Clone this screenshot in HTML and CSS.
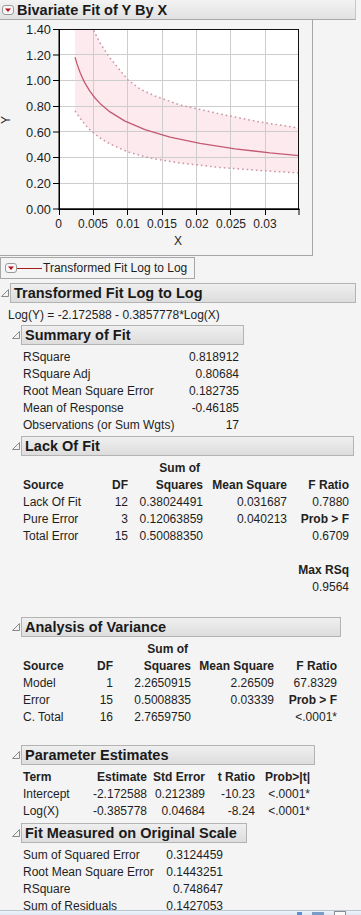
FILE: index.html
```html
<!DOCTYPE html>
<html lang="en">
<head>
<meta charset="UTF-8">
<meta name="viewport" content="width=device-width, initial-scale=1.0">
<title>Bivariate Fit of Y By X</title>
<link rel="stylesheet" href="styles.css">
</head>
<body>
<div class="report-head">
    <svg class="menu-btn" width="12" height="10" viewBox="0 0 12 10">
        <rect x="0.5" y="0.5" width="11" height="9" rx="2.5" fill="#f7f7f7" stroke="#9a9a9a"/>
        <polygon points="3,3.5 9,3.5 6,7" fill="#c0101a"/>
    </svg>
    <span class="report-title">Bivariate Fit of Y By X</span>
</div>

<div class="plot-frame">
    <svg class="plot" width="312" height="235" viewBox="0 20 312 235">
        <defs>
            <clipPath id="area"><rect x="59" y="29" width="240" height="180"/></clipPath>
        </defs>
        <rect x="59" y="29" width="240" height="180" fill="#fff"/>
        <g clip-path="url(#area)">
            <polygon class="band" points="75,29 93,29 100,43 110,58 128,80 140,89 155,96 180,105 220,114 260,122 299,128 299,173 260,170.5 220,167.5 180,163 150,158 128,152 110,144 100,138 90,130 85,124.5 80,118 75,111"/>
            <g class="grid">
                <line x1="93.5" y1="29" x2="93.5" y2="209"/>
                <line x1="127.5" y1="29" x2="127.5" y2="209"/>
                <line x1="162.5" y1="29" x2="162.5" y2="209"/>
                <line x1="196.5" y1="29" x2="196.5" y2="209"/>
                <line x1="230.5" y1="29" x2="230.5" y2="209"/>
                <line x1="265.5" y1="29" x2="265.5" y2="209"/>
                <line x1="59" y1="54.5" x2="299" y2="54.5"/>
                <line x1="59" y1="80.5" x2="299" y2="80.5"/>
                <line x1="59" y1="106.5" x2="299" y2="106.5"/>
                <line x1="59" y1="131.5" x2="299" y2="131.5"/>
                <line x1="59" y1="157.5" x2="299" y2="157.5"/>
                <line x1="59" y1="183.5" x2="299" y2="183.5"/>
            </g>
            <polyline class="ci" points="85,9 93,29 100,43 110,58 128,80 140,89 155,96 180,105 220,114 260,122 299,128"/>
            <polyline class="ci" points="75,111 80,118 85,124.5 90,130 100,138 110,144 128,152 150,158 180,163 220,167.5 260,170.5 299,173"/>
            <polyline class="fit" points="75,57.2 77,63.9 80,72.3 82.5,78.1 85,83.1 90,91.4 95,98 100,103.4 110,111.9 125,121.1 145,129.7 170,137.1 200,143.4 235,148.8 270,152.9 299,155.6"/>
        </g>
        <rect class="border" x="59.5" y="29.5" width="239" height="179.5"/>
        <line class="axis" x1="59.25" y1="29" x2="59.25" y2="210"/>
        <line class="axis" x1="58.5" y1="209.25" x2="299.5" y2="209.25"/>
        <g class="ticks">
            <line x1="53" y1="29.5" x2="59" y2="29.5"/>
            <line x1="53" y1="55" x2="59" y2="55"/>
            <line x1="53" y1="80.5" x2="59" y2="80.5"/>
            <line x1="53" y1="106.5" x2="59" y2="106.5"/>
            <line x1="53" y1="132" x2="59" y2="132"/>
            <line x1="53" y1="157.5" x2="59" y2="157.5"/>
            <line x1="53" y1="183.5" x2="59" y2="183.5"/>
            <line x1="53" y1="209" x2="59" y2="209"/>
            <line x1="59.5" y1="209" x2="59.5" y2="215"/>
            <line x1="93.5" y1="209" x2="93.5" y2="215"/>
            <line x1="127.5" y1="209" x2="127.5" y2="215"/>
            <line x1="162.5" y1="209" x2="162.5" y2="215"/>
            <line x1="196.5" y1="209" x2="196.5" y2="215"/>
            <line x1="230.5" y1="209" x2="230.5" y2="215"/>
            <line x1="265.5" y1="209" x2="265.5" y2="215"/>
            <line x1="299" y1="209" x2="299" y2="215"/>
        </g>
        <g class="ylabels">
            <text x="51" y="34">1.40</text>
            <text x="51" y="59.5">1.20</text>
            <text x="51" y="85">1.00</text>
            <text x="51" y="111">0.80</text>
            <text x="51" y="136.5">0.60</text>
            <text x="51" y="162">0.40</text>
            <text x="51" y="188">0.20</text>
            <text x="51" y="213.5">0.00</text>
        </g>
        <g class="xlabels">
            <text x="58.5" y="227.5">0</text>
            <text x="93" y="227.5">0.005</text>
            <text x="128" y="227.5">0.01</text>
            <text x="162" y="227.5">0.015</text>
            <text x="197" y="227.5">0.02</text>
            <text x="231" y="227.5">0.025</text>
            <text x="265" y="227.5">0.03</text>
        </g>
        <text class="axis-title" x="178" y="245">X</text>
        <text class="axis-title" transform="translate(10 120) rotate(-90)">Y</text>
    </svg>
</div>

<div class="legend">
    <svg class="menu-btn" width="12" height="10" viewBox="0 0 12 10">
        <rect x="0.5" y="0.5" width="11" height="9" rx="2.5" fill="#f7f7f7" stroke="#9a9a9a"/>
        <polygon points="3,3.5 9,3.5 6,7" fill="#c0101a"/>
    </svg>
    <span class="legend-line"></span>
    <span>Transformed Fit Log to Log</span>
</div>

<div class="outline top">
    <div class="outline-row">
        <svg class="toggle" width="10" height="10" viewBox="0 0 10 10"><polygon points="8.5,1.5 8.5,8.5 1.5,8.5"/></svg>
        <div class="outline-box box-fit">Transformed Fit Log to Log</div>
    </div>
    <div class="equation">Log(Y) = -2.172588 - 0.3857778*Log(X)</div>

    <div class="outline sub sub-summary">
        <div class="outline-row">
            <svg class="toggle" width="10" height="10" viewBox="0 0 10 10"><polygon points="8.5,1.5 8.5,8.5 1.5,8.5"/></svg>
            <div class="outline-box box-summary">Summary of Fit</div>
        </div>
        <table class="data t-summary">
            <tr><td>RSquare</td><td class="num">0.818912</td></tr>
            <tr><td>RSquare Adj</td><td class="num">0.80684</td></tr>
            <tr><td>Root Mean Square Error</td><td class="num">0.182735</td></tr>
            <tr><td>Mean of Response</td><td class="num">-0.46185</td></tr>
            <tr><td>Observations (or Sum Wgts)</td><td class="num">17</td></tr>
        </table>
    </div>

    <div class="outline sub sub-lof">
        <div class="outline-row">
            <svg class="toggle" width="10" height="10" viewBox="0 0 10 10"><polygon points="8.5,1.5 8.5,8.5 1.5,8.5"/></svg>
            <div class="outline-box box-lof">Lack Of Fit</div>
        </div>
        <table class="data t-lof">
            <colgroup><col class="lof-1"><col class="lof-2"><col class="lof-3"><col class="lof-4"><col class="lof-5"></colgroup>
            <tr class="hd"><td></td><td></td><td class="num sum-of">Sum of</td><td></td><td></td></tr>
            <tr class="hd"><td>Source</td><td class="num">DF</td><td class="num">Squares</td><td class="num">Mean Square</td><td class="num">F Ratio</td></tr>
            <tr><td>Lack Of Fit</td><td class="num">12</td><td class="num">0.38024491</td><td class="num">0.031687</td><td class="num">0.7880</td></tr>
            <tr><td>Pure Error</td><td class="num">3</td><td class="num">0.12063859</td><td class="num">0.040213</td><td class="num b">Prob &gt; F</td></tr>
            <tr><td>Total Error</td><td class="num">15</td><td class="num">0.50088350</td><td></td><td class="num">0.6709</td></tr>
            <tr><td colspan="5">&nbsp;</td></tr>
            <tr><td colspan="4"></td><td class="num b">Max RSq</td></tr>
            <tr><td colspan="4"></td><td class="num">0.9564</td></tr>
        </table>
    </div>

    <div class="outline sub sub-anova">
        <div class="outline-row">
            <svg class="toggle" width="10" height="10" viewBox="0 0 10 10"><polygon points="8.5,1.5 8.5,8.5 1.5,8.5"/></svg>
            <div class="outline-box box-anova">Analysis of Variance</div>
        </div>
        <table class="data t-anova">
            <colgroup><col class="av-1"><col class="av-2"><col class="av-3"><col class="av-4"><col class="av-5"></colgroup>
            <tr class="hd"><td></td><td></td><td class="num sum-of">Sum of</td><td></td><td></td></tr>
            <tr class="hd"><td>Source</td><td class="num">DF</td><td class="num">Squares</td><td class="num">Mean Square</td><td class="num">F Ratio</td></tr>
            <tr><td>Model</td><td class="num">1</td><td class="num">2.2650915</td><td class="num">2.26509</td><td class="num">67.8329</td></tr>
            <tr><td>Error</td><td class="num">15</td><td class="num">0.5008835</td><td class="num">0.03339</td><td class="num b">Prob &gt; F</td></tr>
            <tr><td>C. Total</td><td class="num">16</td><td class="num">2.7659750</td><td></td><td class="num">&lt;.0001*</td></tr>
        </table>
    </div>

    <div class="outline sub sub-params">
        <div class="outline-row">
            <svg class="toggle" width="10" height="10" viewBox="0 0 10 10"><polygon points="8.5,1.5 8.5,8.5 1.5,8.5"/></svg>
            <div class="outline-box box-params">Parameter Estimates</div>
        </div>
        <table class="data t-params">
            <colgroup><col class="pe-1"><col class="pe-2"><col class="pe-3"><col class="pe-4"><col class="pe-5"></colgroup>
            <tr class="hd"><td>Term</td><td class="num">Estimate</td><td class="num">Std Error</td><td class="num">t Ratio</td><td class="num">Prob&gt;|t|</td></tr>
            <tr><td>Intercept</td><td class="num">-2.172588</td><td class="num">0.212389</td><td class="num">-10.23</td><td class="num">&lt;.0001*</td></tr>
            <tr><td>Log(X)</td><td class="num">-0.385778</td><td class="num">0.04684</td><td class="num">-8.24</td><td class="num">&lt;.0001*</td></tr>
        </table>
    </div>

    <div class="outline sub sub-orig">
        <div class="outline-row">
            <svg class="toggle" width="10" height="10" viewBox="0 0 10 10"><polygon points="8.5,1.5 8.5,8.5 1.5,8.5"/></svg>
            <div class="outline-box box-orig">Fit Measured on Original Scale</div>
        </div>
        <table class="data t-orig">
            <tr><td>Sum of Squared Error</td><td class="num">0.3124459</td></tr>
            <tr><td>Root Mean Square Error</td><td class="num">0.1443251</td></tr>
            <tr><td>RSquare</td><td class="num">0.748647</td></tr>
            <tr><td>Sum of Residuals</td><td class="num">0.1427053</td></tr>
        </table>
    </div>
</div>

<div class="status-bar">
    <span class="sb-icon sb-arrow"></span>
    <span class="sb-icon sb-grid"></span>
    <span class="sb-icon sb-box"></span>
</div>
</body>
</html>
```

FILE: styles.css
```css
body {
    margin: 0;
    background-color: #f4f4f4;
    font-family: "Liberation Sans", Arial, sans-serif;
    font-size: 12px;
    color: #1e1e1e;
}

/* report header */
.report-head {
    height: 20px;
    width: 356px;
    box-sizing: border-box;
    display: flex;
    align-items: center;
    background: linear-gradient(#f3f3f3, #e1e1e1);
    border-bottom: 1px solid #a9a9a9;
    border-right: 1px solid #c6c6c6;
}

.menu-btn {
    display: block;
    flex: none;
    margin-left: 2px;
}

.report-title {
    margin-left: 3px;
    font-weight: bold;
    font-size: 14.5px;
    color: #1a1a1a;
}

/* plot */
.plot-frame {
    width: 313px;
    height: 236px;
    box-sizing: border-box;
    border-right: 1px solid #a6a6a6;
    border-bottom: 1px solid #a6a6a6;
}

.plot {
    display: block;
    font-family: "Liberation Sans", Arial, sans-serif;
}

.band {
    fill: #fdeaee;
}

.grid line {
    stroke: #cdcdcd;
    stroke-width: 1;
}

.ci {
    fill: none;
    stroke: #c995a3;
    stroke-width: 1.5;
    stroke-dasharray: 1.6 3;
}

.fit {
    fill: none;
    stroke: #c25a72;
    stroke-width: 1.3;
    stroke-linejoin: round;
}

.border {
    fill: none;
    stroke: #111;
    stroke-width: 1;
}

.axis {
    stroke: #000;
    stroke-width: 1.5;
}

.ticks line {
    stroke: #000;
    stroke-width: 1;
}

.ylabels text {
    font-size: 12.8px;
    fill: #1e1e1e;
    text-anchor: end;
}

.xlabels text {
    font-size: 12px;
    fill: #1e1e1e;
    text-anchor: middle;
}

.axis-title {
    font-size: 12px;
    fill: #1e1e1e;
    text-anchor: middle;
}

/* legend */
.legend {
    margin-top: 1px;
    width: 195px;
    height: 22px;
    box-sizing: border-box;
    border: 1px solid #a8a8a8;
    display: flex;
    align-items: center;
    padding-left: 4px;
}

.legend .menu-btn {
    margin-left: 0;
}

.legend-line {
    width: 25px;
    height: 1px;
    background-color: #a31b1b;
    margin-right: 1px;
}

/* outlines */
.outline-row {
    display: flex;
    align-items: center;
}

.toggle {
    display: block;
    flex: none;
}

.toggle polygon {
    fill: #f2f2f2;
    stroke: #8a8a8a;
    stroke-width: 1;
}

.outline-box {
    height: 20px;
    box-sizing: border-box;
    border: 1px solid #b3b3b3;
    background: linear-gradient(#efefef, #dddddd);
    padding-left: 3px;
    line-height: 18px;
    font-weight: bold;
    font-size: 14.5px;
    color: #1a1a1a;
    white-space: nowrap;
}

.top {
    margin-top: 4px;
}

.box-fit { width: 346px; }
.box-summary { width: 223px; }
.box-lof { width: 333px; }
.box-anova { width: 320px; }
.box-params { width: 294px; }
.box-orig { width: 226px; }

.equation {
    margin-top: 4px;
    padding-left: 8px;
    line-height: 17px;
}

.sub {
    margin-left: 11px;
}

.sub-summary { margin-top: 1px; }
.sub-lof { margin-top: 2px; }
.sub-anova { margin-top: 21px; }
.sub-params { margin-top: 19px; }
.sub-orig { margin-top: 3px; }

/* tables */
.data {
    margin-top: 4px;
    margin-left: 12px;
    border-collapse: collapse;
    border-spacing: 0;
    table-layout: fixed;
}

.data td {
    padding: 0;
    height: 17px;
    line-height: 17px;
    white-space: nowrap;
}

.data .num {
    text-align: right;
}

.data .hd td,
.data .b {
    font-weight: bold;
    color: #222;
}

.sum-of {
    padding-right: 3px !important;
}

.t-summary { width: 216px; }
.t-orig { width: 200px; }

.lof-1 { width: 82px; }
.lof-2 { width: 23px; }
.lof-3 { width: 75px; }
.lof-4 { width: 84px; }
.lof-5 { width: 62px; }

.av-1 { width: 70px; }
.av-2 { width: 20px; }
.av-3 { width: 78px; }
.av-4 { width: 83px; }
.av-5 { width: 63px; }

.pe-1 { width: 64px; }
.pe-2 { width: 60px; }
.pe-3 { width: 58px; }
.pe-4 { width: 50px; }
.pe-5 { width: 55px; }

/* window status bar */
.status-bar {
    position: fixed;
    left: 0;
    right: 0;
    bottom: 0;
    height: 4px;
    background: linear-gradient(#eef3f8, #dfe7f0);
    border-top: 1px solid #b9c5d3;
    display: flex;
    justify-content: flex-end;
    align-items: flex-end;
    gap: 10px;
    padding-right: 15px;
}

.sb-icon {
    display: block;
    height: 3px;
}

.sb-arrow {
    width: 5px;
    background-color: #5b8fd0;
}

.sb-grid {
    width: 12px;
    background-color: #7a9cc8;
}

.sb-box {
    width: 12px;
    height: 4px;
    box-sizing: border-box;
    border: 1px solid #8d8d8d;
    border-bottom: none;
    background-color: #fafafa;
}
```
